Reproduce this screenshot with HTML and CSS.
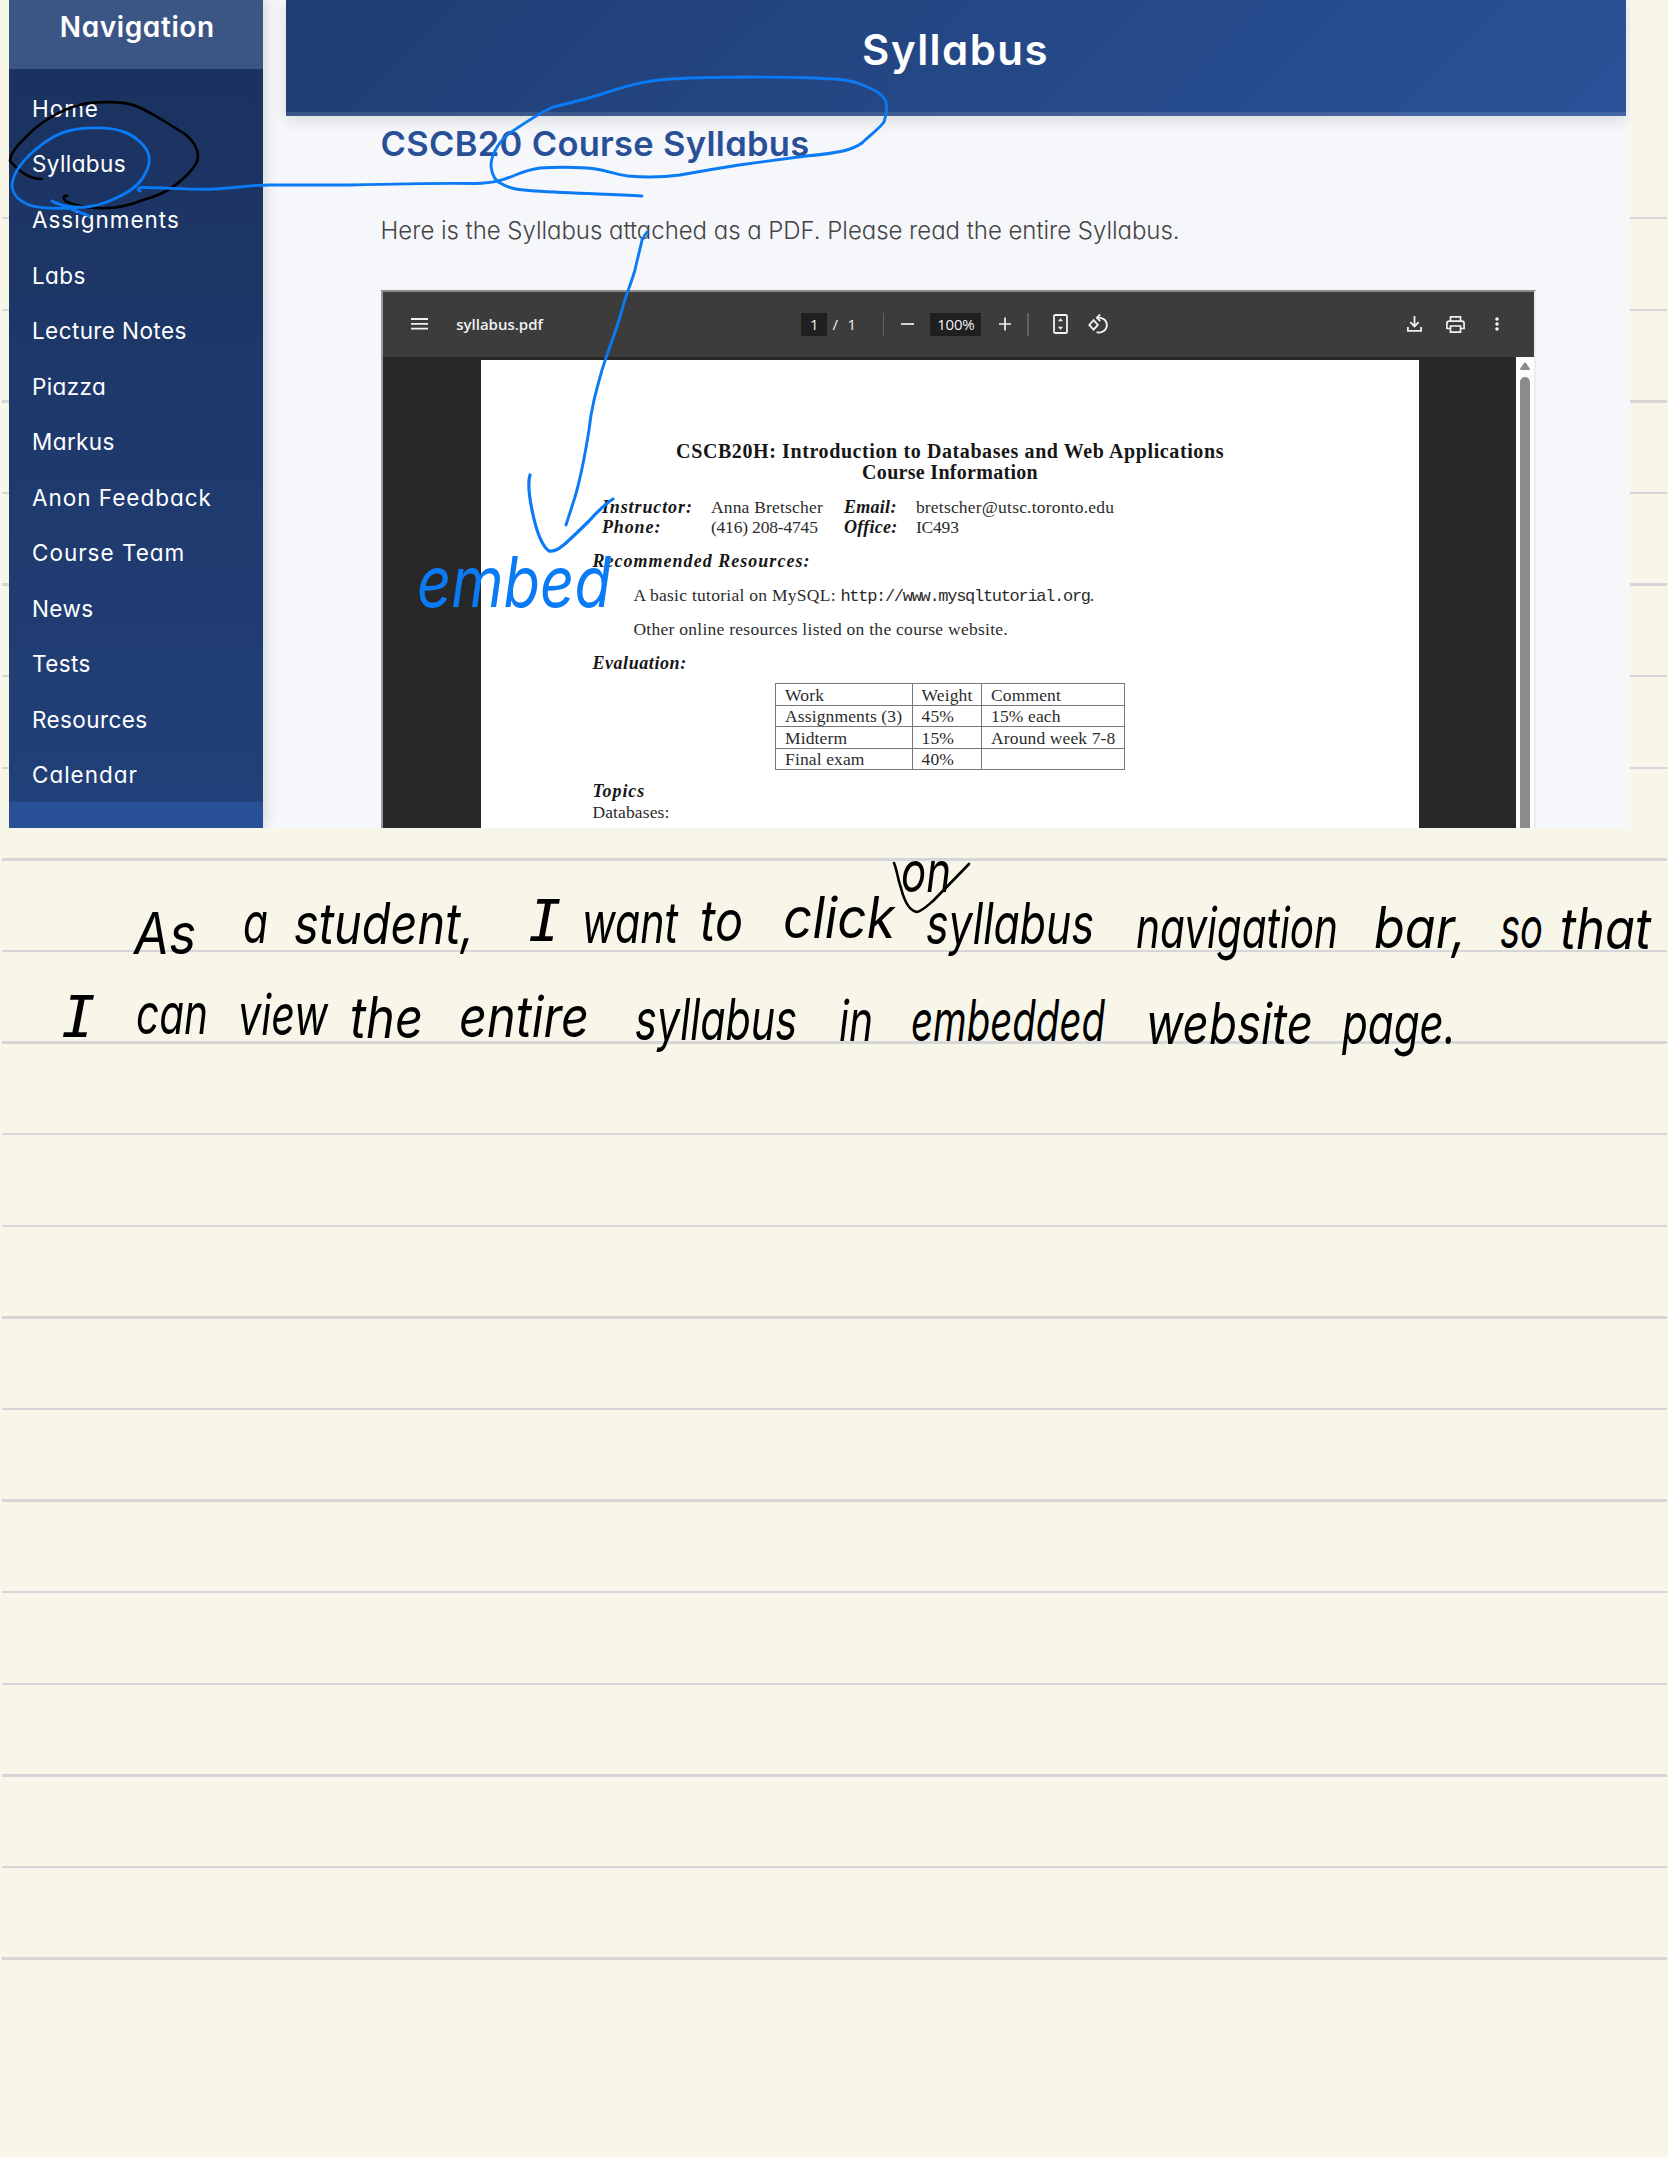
FILE: index.html
```html
<!DOCTYPE html>
<html lang="en">
<head>
<meta charset="utf-8">
<title>CSCB20 Syllabus notes</title>
<link rel="stylesheet" href="styles.css">
</head>
<body>
<main class="notebook">
  <section class="capture">
    <nav class="sidebar">
      <h2 class="sidebar-title">Navigation</h2>
      <ul class="links">
        <li class="wide">Home</li>
        <li>Syllabus</li>
        <li class="wide">Assignments</li>
        <li>Labs</li>
        <li>Lecture Notes</li>
        <li>Piazza</li>
        <li>Markus</li>
        <li class="wide">Anon Feedback</li>
        <li class="wide">Course Team</li>
        <li>News</li>
        <li>Tests</li>
        <li>Resources</li>
        <li class="wide">Calendar</li>
      </ul>
    </nav>
    <div class="site">
      <header class="banner"><h1>Syllabus</h1></header>
      <div class="content">
        <h2 class="heading">CSCB20 Course Syllabus</h2>
        <p class="intro">Here is the Syllabus attached as a PDF. Please read the entire Syllabus.</p>
        <div class="viewer">
          <div class="toolbar">
            <svg class="menu" width="17" height="12" viewBox="0 0 17 12"><path d="M0 1h17M0 5.8h17M0 10.6h17" stroke="#f1f1f1" stroke-width="1.8"/></svg>
            <span class="filename">syllabus.pdf</span>
            <span class="box page-no">1</span>
            <span class="slash">/</span>
            <span class="total">1</span>
            <i class="divider"></i>
            <svg class="minus" width="13" height="14" viewBox="0 0 13 14"><path d="M0 7h13" stroke="#f1f1f1" stroke-width="1.7"/></svg>
            <span class="box zoom">100%</span>
            <svg class="plus" width="12" height="14" viewBox="0 0 12 14"><path d="M0 7h12M6 .5v13" stroke="#f1f1f1" stroke-width="1.7"/></svg>
            <i class="divider second"></i>
            <svg class="fit" width="15" height="20" viewBox="0 0 15 20"><rect x="1" y="1" width="13" height="18" rx="1.3" fill="none" stroke="#f1f1f1" stroke-width="1.8"/><path d="M7.5 4.3l2.6 3H4.9zM7.5 15.7l2.6-3H4.9z" fill="#f1f1f1"/></svg>
            <svg class="rotate" width="20" height="20" viewBox="0 0 20 20" fill="none" stroke="#f1f1f1" stroke-width="1.8"><path d="M5.6 6.2l4.3 4.7-4.3 4.7L1.3 10.900z"/><path d="M9.300 3.600c5-.5 9.600 2.500 9.600 7.400 0 5-5 8.700-10.300 7.200"/><path d="M12.200.5L8.800 3.700l3.400 3.400"/></svg>
            <svg class="download" width="15" height="16" viewBox="0 0 15 16" fill="none" stroke="#f1f1f1" stroke-width="1.8"><path d="M7.500 0v10M3.300 6.200l4.200 4.200 4.200-4.200M.9 11v3.800h13.200V11"/></svg>
            <svg class="print" width="19" height="17" viewBox="0 0 19 17" fill="none" stroke="#f1f1f1" stroke-width="1.700"><path d="M4.500 4.800V.9h10v3.900M4.500 12.500H.9V7.500c0-1.500.8-2.400 2.200-2.400h12.800c1.400 0 2.200.9 2.200 2.400v5h-3.600"/><path d="M4.500 10h10v6.100h-10z"/></svg>
            <svg class="more" width="4" height="14" viewBox="0 0 4 14" fill="#f1f1f1"><circle cx="2" cy="2" r="1.800"/><circle cx="2" cy="7" r="1.800"/><circle cx="2" cy="12" r="1.800"/></svg>
          </div>
          <div class="stage">
            <article class="paper">
              <h3 class="doc-title">CSCB20H: Introduction to Databases and Web Applications<br><span class="sub">Course Information</span></h3>
              <div class="info">
                <b>Instructor:</b><span>Anna Bretscher</span><b class="tight">Email:</b><span>bretscher@utsc.toronto.edu</span>
                <b>Phone:</b><span class="digits">(416) 208-4745</span><b class="tight">Office:</b><span class="digits">IC493</span>
              </div>
              <h4 class="label spread">Recommended Resources:</h4>
              <p class="entry">A basic tutorial on MySQL: <code>http://www.mysqltutorial.org</code>.</p>
              <p class="entry">Other online resources listed on the course website.</p>
              <h4 class="label">Evaluation:</h4>
              <table class="marks">
                <tr><td>Work</td><td>Weight</td><td>Comment</td></tr>
                <tr><td>Assignments (3)</td><td>45%</td><td>15% each</td></tr>
                <tr><td>Midterm</td><td>15%</td><td>Around week 7-8</td></tr>
                <tr><td>Final exam</td><td>40%</td><td></td></tr>
              </table>
              <h4 class="label topics">Topics</h4>
              <p class="topic">Databases:</p>
            </article>
            <div class="scrollbar">
              <svg width="10" height="8" viewBox="0 0 10 8"><path d="M4.200.8q.8-1 1.600 0L9.800 6.500Q10.300 8 9 8H1Q-.3 8 .2 6.500z" fill="#8b8b8b"/></svg>
              <div class="thumb"></div>
            </div>
          </div>
        </div>
      </div>
    </div>
  </section>

  <svg class="ink" width="1668" height="2157" viewBox="0 0 1668 2157">
    <g class="pen black">
      <path d="M42 179C29 179 20 172 10 161C10 152 21 142 28 135C38 124 60 110 79 105C90 102 122 100 136 106C146 110 154 115 164 121L185 134C195 142 198 150 198 157C198 163 193 169 187 175C172 190 160 195 143 200C128 206 110 209 97 208C86 208 66 204 64 199Q63 195 67 196"/>
      <path d="M894 863C897 870 898 880 901 888C905 904 911 911 917 912C922 911 927 906 933 901L969 864"/>
    </g>
    <g class="pen blue">
      <path d="M89 216C82 213 60 205 52 201C60 206 74 208 86 207C98 206 108 202 116 198C130 192 140 184 145 174C149 167 150 163 149 157C148 147 135 135 121 131C110 127 85 127 72 130C55 133 42 144 35 150C20 163 12 176 12 187C14 197 20 201 27 204C35 208 52 209 76 208"/>
      <path d="M140 191C136 189 139 187 146 187.500C170 188 195 190 214 189C235 188 250 185 270 185H350C390 184 430 183 475 183.500C510 183 515 171 540 168C555 167 570 167 587 168C604 169 612 174 628 176C650 178 665 177 680 175C702 171 720 168 739 165L806 156C840 153 852 150 862 143C869 136 879 129 884 122C887 114 887 108 886 102C884 95 875 90 865 86C850 79 838 79 815 78C780 77 730 76 671 79C640 81 620 88 605 93C580 101 565 104 553 107C540 113 520 126 507 135C497 145 491 155 491 166C492 177 497 182 502 184C510 189 520 190 535 191C570 193 600 194 642 196"/>
      <path d="M647 232Q644 236 642 240C640 250 637 260 635 270C630 287 625 297 622 310C615 335 608 350 602 370C595 395 591 410 589 430C585 455 580 480 575 497L566 525"/>
      <path class="bold" d="M530 475C527 484 530 500 532 510C536 530 542 546 549 551C555 552 560 548 566 543C578 532 583 527 589 521C598 511 605 504 613 499"/>
    </g>
    <g class="hand blue-text">
      <text x="417" y="607" textLength="194" lengthAdjust="spacingAndGlyphs">embed</text>
    </g>
    <g class="hand">
      <text x="134" y="954" textLength="62" lengthAdjust="spacingAndGlyphs">As</text>
      <text x="243" y="943" textLength="25" lengthAdjust="spacingAndGlyphs">a</text>
      <text x="294" y="944" textLength="180" lengthAdjust="spacingAndGlyphs">student,</text>
      <text x="530" y="941" textLength="28" lengthAdjust="spacingAndGlyphs">I</text>
      <text x="582" y="943" textLength="96" lengthAdjust="spacingAndGlyphs">want</text>
      <text x="700" y="941" textLength="43" lengthAdjust="spacingAndGlyphs">to</text>
      <text x="783" y="938" textLength="112" lengthAdjust="spacingAndGlyphs">click</text>
      <text x="901" y="892" textLength="50" lengthAdjust="spacingAndGlyphs">on</text>
      <text x="926" y="944" textLength="168" lengthAdjust="spacingAndGlyphs">syllabus</text>
      <text x="1136" y="948" textLength="202" lengthAdjust="spacingAndGlyphs">navigation</text>
      <text x="1374" y="948" textLength="92" lengthAdjust="spacingAndGlyphs">bar,</text>
      <text x="1500" y="948" textLength="43" lengthAdjust="spacingAndGlyphs">so</text>
      <text x="1560" y="949" textLength="91" lengthAdjust="spacingAndGlyphs">that</text>
      <text x="63" y="1037" textLength="29" lengthAdjust="spacingAndGlyphs">I</text>
      <text x="136" y="1034" textLength="72" lengthAdjust="spacingAndGlyphs">can</text>
      <text x="238" y="1035" textLength="90" lengthAdjust="spacingAndGlyphs">view</text>
      <text x="350" y="1038" textLength="73" lengthAdjust="spacingAndGlyphs">the</text>
      <text x="459" y="1037" textLength="130" lengthAdjust="spacingAndGlyphs">entire</text>
      <text x="635" y="1040" textLength="162" lengthAdjust="spacingAndGlyphs">syllabus</text>
      <text x="839" y="1041" textLength="34" lengthAdjust="spacingAndGlyphs">in</text>
      <text x="911" y="1041" textLength="194" lengthAdjust="spacingAndGlyphs">embedded</text>
      <text x="1146" y="1044" textLength="167" lengthAdjust="spacingAndGlyphs">website</text>
      <text x="1342" y="1044" textLength="114" lengthAdjust="spacingAndGlyphs">page.</text>
    </g>
  </svg>
</main>
</body>
</html>
```
FILE: styles.css
```css
* { box-sizing: border-box; margin: 0; padding: 0; }
body { background: #f8f6e9; font-family: Inter, "Open Sans", sans-serif; font-feature-settings: "cv11"; }

.notebook {
  position: relative;
  width: 1668px;
  height: 2157px;
  padding-left: 9px;
  overflow: hidden;
  background: repeating-linear-gradient(to bottom, #d6d5d8 0 2.500px, transparent 2.500px 91.600px) 1.500px 216.700px / 1665px 1744px no-repeat #f8f6e9;
}

.capture { display: flex; width: 1621px; height: 828.300px; overflow: hidden; background: #f5f7fb; }

.sidebar { flex: 0 0 253.500px; background: #295096; color: #fff; box-shadow: 3px 0 12px rgba(0,0,0,.13); }
.sidebar-title { height: 68.700px; padding-left: 3px; font-size: 28px; line-height: 55px; font-weight: 600; text-align: center; letter-spacing: .6px; background: #3b5685; }
.links { list-style: none; padding: 12.200px 0 0 23px; height: 733px; background: linear-gradient(#1a325f, #224079); }
.links li { height: 55.550px; line-height: 55.550px; font-size: 22.500px; letter-spacing: .4px; }
.links .wide { letter-spacing: .98px; }

.site { flex: 1; padding-left: 23.100px; }
.banner { width: 1340px; height: 115.700px; background: linear-gradient(135deg, #1f3d73, #2a5298) border-box; border-bottom: 4.700px solid rgba(255,255,255,.12); box-shadow: 0 4px 15px rgba(0,0,0,.12); color: #fff; text-align: center; }
.banner h1 { font-size: 42px; line-height: 99px; font-weight: 600; letter-spacing: 1.450px; }
.content { padding-left: 95px; }
.heading { color: #295096; font-size: 34.500px; line-height: 55.200px; font-weight: 600; letter-spacing: .3px; }
.intro { margin-top: 40.400px; color: #444; font-size: 24px; line-height: 40px; font-weight: 300; letter-spacing: -.04px; }

.viewer { width: 1155px; margin-top: 38.400px; border: 2px solid; border-color: #8b8c8e #ececee #ececee #9a9b9d; }
.toolbar { display: flex; align-items: center; height: 65px; padding-left: 28.300px; background: #3c3c3c; color: #f1f1f1; font: 600 15px "Open Sans", sans-serif; }
.toolbar svg, .toolbar span, .toolbar i { flex: none; }
.filename { width: 345.200px; margin-left: 28.300px; }
.box { height: 23px; line-height: 23px; background: #1f1f1f; text-align: center; }
.page-no { width: 26px; font-weight: 400; }
.slash { width: 7px; margin-left: 5px; font-weight: 400; }
.total { width: 9px; margin-left: 8px; font-weight: 400; }
.divider { width: 1.500px; height: 23px; margin-left: 26.500px; background: #626262; }
.minus { margin-left: 17px; }
.zoom { width: 51px; margin-left: 16px; letter-spacing: -.2px; font-weight: 400; }
.plus { margin-left: 17.500px; }
.second { margin-left: 16.500px; }
.fit { margin-left: 24.500px; }
.rotate { margin-left: 19.500px; }
.download { margin-left: 299px; }
.print { margin-left: 24px; }
.more { margin-left: 30px; }

.stage { display: flex; height: 480px; padding: 3.300px 0 0 98.200px; background: #282828; }
.paper { flex: 0 0 938.600px; height: 480px; padding: 81px 111.600px 0; background: #fff; color: #2b2b2b; font: 17.500px/20.600px "Liberation Serif", serif; letter-spacing: .2px; }
.scrollbar { flex: 0 0 17.500px; margin: -3.300px 0 0 auto; padding: 5px 3.500px; background: #fcfcfc; }
.scrollbar svg { display: block; }
.thumb { width: 10.200px; height: 500px; margin-top: 7px; border-radius: 5px; background: #8b8b8b; }

.doc-title { margin: 0 -20px; text-align: center; white-space: nowrap; font-size: 20px; font-weight: 700; letter-spacing: .6px; color: #161616; }
.sub { letter-spacing: .3px; }
.info { display: grid; grid-template-columns: 109px 133px 72px auto; margin: 14.500px 0 0 9.500px; }
.info b { font-style: italic; font-size: 18px; letter-spacing: .9px; color: #161616; }
.info .tight { letter-spacing: .3px; }
.digits { letter-spacing: -.18px; }
.label { margin-top: 13px; font-size: 18px; font-style: italic; letter-spacing: .58px; color: #161616; }
.spread { letter-spacing: 1.030px; }
.entry { margin: 13.600px 0 0 41px; letter-spacing: .27px; }
.entry code { font: 17px/1 "Liberation Mono", monospace; letter-spacing: -1.300px; }
.marks { margin: 10px auto 0; border-collapse: collapse; letter-spacing: .12px; }
.marks td { height: 21.500px; padding: 0 0 0 9px; border: 1px solid #777; line-height: 20px; }
.marks td:nth-child(1) { width: 136.500px; }
.marks td:nth-child(2) { width: 69.500px; }
.marks td:nth-child(3) { width: 143px; }
.topics { margin-top: 11px; letter-spacing: .9px; }
.topic { letter-spacing: .14px; }

.ink { position: absolute; left: 0; top: 0; }
.pen { fill: none; stroke-linecap: round; stroke-linejoin: round; stroke-width: 2.600px; }
.black { stroke: #000; }
.blue { stroke: #0a7af5; stroke-width: 2.900px; }
.bold { stroke-width: 3.200px; }
.hand { font: italic 400 57px Inter, sans-serif; font-feature-settings: "cv11", "cv08"; fill: #000; }
.blue-text { font-size: 70px; fill: #0a7af5; }
```
